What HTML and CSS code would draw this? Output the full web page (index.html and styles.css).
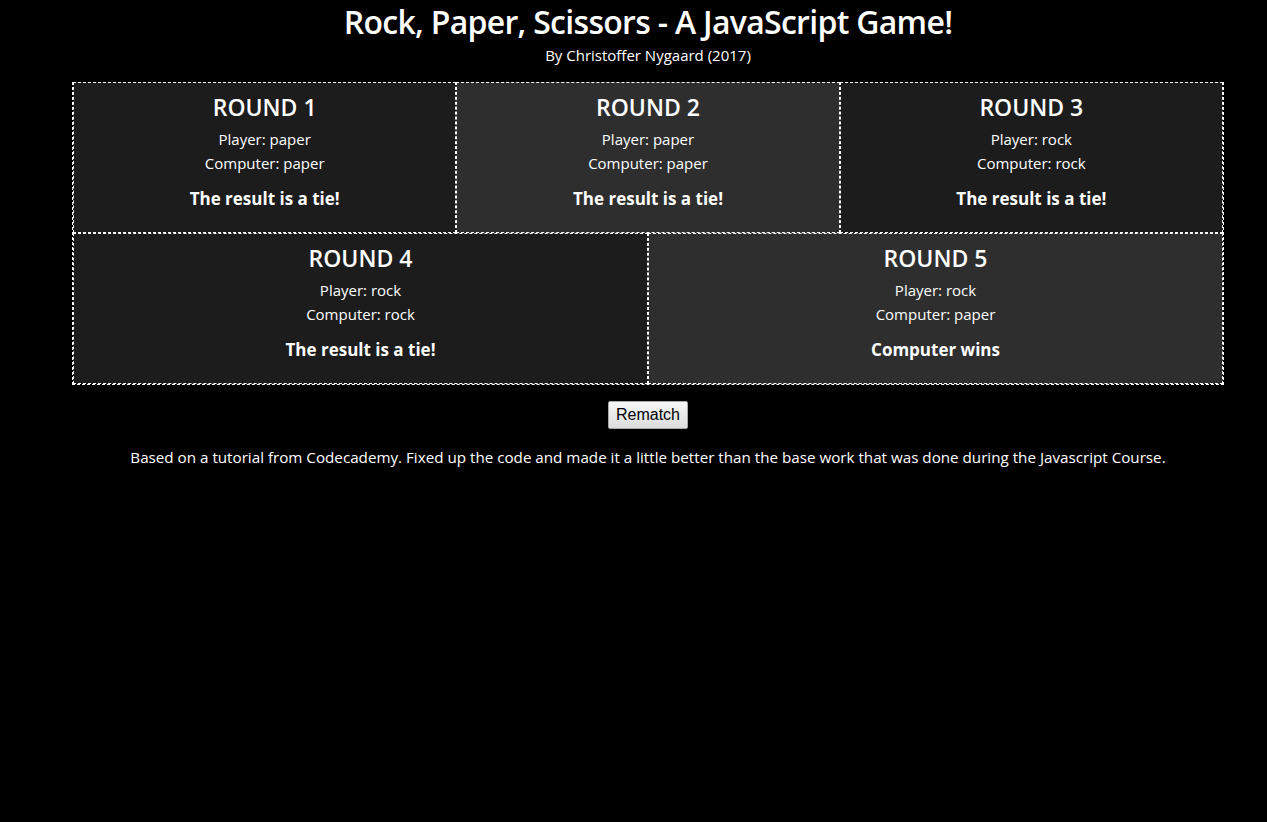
FILE: index.html
```html
<!DOCTYPE html>
<html lang="en">
<head>
<meta charset="utf-8">
<title>Rock, Paper, Scissors</title>
<link rel="stylesheet" href="styles.css">
</head>
<body>
<div class="page">
  <header class="header">
    <h1 class="title">Rock, Paper, Scissors - A JavaScript Game!</h1>
    <p class="byline">By Christoffer Nygaard (2017)</p>
  </header>
  <section class="board">
    <div class="row row-3">
      <div class="round dark">
        <h2 class="round-title">ROUND 1</h2>
        <p class="line first">Player: paper</p>
        <p class="line">Computer: paper</p>
        <p class="result">The result is a tie!</p>
      </div>
      <div class="round light">
        <h2 class="round-title">ROUND 2</h2>
        <p class="line first">Player: paper</p>
        <p class="line">Computer: paper</p>
        <p class="result">The result is a tie!</p>
      </div>
      <div class="round dark">
        <h2 class="round-title">ROUND 3</h2>
        <p class="line first">Player: rock</p>
        <p class="line">Computer: rock</p>
        <p class="result">The result is a tie!</p>
      </div>
    </div>
    <div class="row row-2">
      <div class="round dark">
        <h2 class="round-title">ROUND 4</h2>
        <p class="line first">Player: rock</p>
        <p class="line">Computer: rock</p>
        <p class="result">The result is a tie!</p>
      </div>
      <div class="round light">
        <h2 class="round-title">ROUND 5</h2>
        <p class="line first">Player: rock</p>
        <p class="line">Computer: paper</p>
        <p class="result">Computer wins</p>
      </div>
    </div>
  </section>
  <div class="actions">
    <button class="rematch" type="button">Rematch</button>
  </div>
  <p class="footer">Based on a tutorial from Codecademy. Fixed up the code and made it a little better than the base work that was done during the Javascript Course.</p>
</div>
</body>
</html>
```

FILE: styles.css
```css
html {
  background: #000;
  overflow: hidden;
}
body {
  margin: 0;
  background: #000;
  color: #fff;
  font-family: "Open Sans", "Noto Sans", "DejaVu Sans", sans-serif;
}
.page {
  width: 1296px;
  display: flex;
  flex-direction: column;
  align-items: center;
}
.header {
  text-align: center;
}
.title {
  margin: 0;
  font-size: 32px;
  line-height: 44px;
  font-weight: 600;
  letter-spacing: -0.7px;
}
.byline {
  margin: 0;
  font-size: 15px;
  line-height: 22px;
}
.board {
  width: 1152px;
  box-sizing: border-box;
  margin-top: 16px;
  border: 1px dashed #fff;
  border-top: 0;
  display: flex;
  flex-direction: column;
}
.row {
  display: grid;
}
.row-3 {
  grid-template-columns: 1fr 1fr 1fr;
}
.row-2 {
  grid-template-columns: 1fr 1fr;
}
.round {
  box-sizing: border-box;
  height: 151px;
  border: 1px dashed #fff;
  padding-top: 9px;
  text-align: center;
}
.dark {
  background: #1c1c1c;
}
.light {
  background: #2e2e2e;
}
.round-title {
  margin: 0;
  font-size: 23px;
  line-height: 30px;
  font-weight: 600;
}
.line {
  margin: 0;
  font-size: 15px;
  line-height: 24px;
}
.line.first {
  margin-top: 5px;
}
.result {
  margin: 12px 0 0;
  font-size: 17px;
  line-height: 24px;
  font-weight: 700;
}
.actions {
  margin-top: 16px;
}
.rematch {
  width: 80px;
  height: 28px;
  padding: 0;
  font-family: "Liberation Sans", Arial, sans-serif;
  font-size: 16px;
  color: #000;
  background: linear-gradient(#f7f7f7, #dcdcdc);
  border: 1px solid #a8a8a8;
  border-radius: 2px;
}
.footer {
  margin: 17px 0 0;
  font-size: 15.2px;
  line-height: 22px;
}
```
